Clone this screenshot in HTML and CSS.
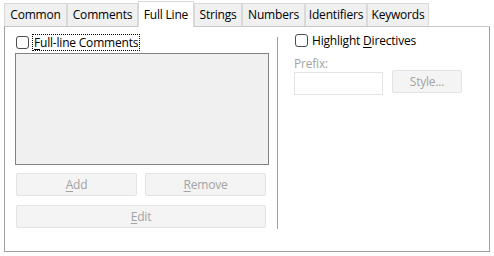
FILE: index.html
```html
<!DOCTYPE html>
<html lang="en">

<head>
    <meta charset="UTF-8">
    <title>Full Line</title>
    <link rel="stylesheet" href="styles.css">
</head>

<body>
    <!-- tab strip -->
    <div class="tabs">
        <div class="tab">Common</div>
        <div class="tab">Comments</div>
        <div class="tab tab-active">Full Line</div>
        <div class="tab">Strings</div>
        <div class="tab">Numbers</div>
        <div class="tab">Identifiers</div>
        <div class="tab">Keywords</div>
    </div>

    <!-- tab page -->
    <div class="panel">
        <div class="left">
            <label class="check check-focus">
                <span class="box"></span>
                <span class="label"><u>F</u>ull-line Comments</span>
            </label>
            <div class="listbox"></div>
            <div class="btn-row">
                <button class="btn" disabled><u>A</u>dd</button>
                <button class="btn" disabled><u>R</u>emove</button>
            </div>
            <button class="btn btn-wide" disabled><u>E</u>dit</button>
        </div>

        <div class="sep"></div>

        <div class="right">
            <label class="check">
                <span class="box"></span>
                <span class="label">Highlight <u>D</u>irectives</span>
            </label>
            <div class="prefix-label">Prefix:</div>
            <div class="prefix-row">
                <div class="input"></div>
                <button class="btn btn-style" disabled>Style...</button>
            </div>
        </div>
    </div>
</body>

</html>
```

FILE: styles.css
```css
* {
    margin: 0;
    padding: 0;
    box-sizing: border-box;
}

body {
    width: 494px;
    height: 256px;
    background-color: #fff;
    font-family: "Open Sans", "Noto Sans", sans-serif;
    font-size: 12px;
    letter-spacing: -0.2px;
    color: #000;
    padding: 1px 0 0 4px;
}

u {
    text-decoration: underline;
    text-underline-offset: 2px;
}

/* tabs */
.tabs {
    display: grid;
    grid-template-columns: 63px 71px 56px 48px 63px 62px 62px;
    align-items: end;
    height: 25px;
    width: 425px;
}

.tab {
    height: 23px;
    line-height: 21px;
    text-align: center;
    background-color: #f0f0f0;
    border: 1px solid #d9d9d9;
    border-bottom: none;
    white-space: nowrap;
}

.tab-active {
    height: 26px;
    line-height: 25px;
    background-color: #fff;
    border-color: #d9d9d9;
    position: relative;
    margin-bottom: -1px;
    z-index: 1;
}

/* page */
.panel {
    width: 486px;
    height: 226px;
    border: 1px solid #a0a0a0;
    border-top-color: #c8c8c8;
    display: flex;
    padding: 7px 0 0 10px;
}

.left {
    width: 254px;
}

.check {
    display: flex;
    align-items: center;
    height: 16px;
    margin-left: 1px;
}

.box {
    width: 13px;
    height: 13px;
    border: 1px solid #4d4d4d;
    border-radius: 3px;
    background-color: #fff;
    margin-right: 4px;
}

.check-focus .label {
    outline: 1px dotted #000;
    padding: 0 1px;
    line-height: 15px;
}

.listbox {
    margin-top: 3px;
    height: 112px;
    border: 1px solid #828282;
    background-color: #f0f0f0;
}

.btn {
    font-family: inherit;
    font-size: 12px;
    letter-spacing: inherit;
    color: #a3a3a3;
    height: 23px;
    background-color: #f4f4f4;
    border: 1px solid #e3e3e3;
    border-radius: 2px;
}

.btn-row {
    display: flex;
    gap: 8px;
    margin: 8px 0 0 1px;
}

.btn-row .btn {
    width: 121px;
}

.btn-wide {
    width: 250px;
    margin: 9px 0 0 1px;
}

.sep {
    width: 2px;
    height: 192px;
    margin: 3px 0 0 8px;
    border-left: 1px solid #a0a0a0;
}

.right {
    margin-left: 15px;
}

.right .check {
    margin-top: -2px;
}

.prefix-label {
    color: #a3a3a3;
    margin-top: 8px;
    line-height: 16px;
}

.prefix-row {
    display: flex;
    align-items: flex-start;
    gap: 9px;
    margin-top: -2px;
}

.input {
    width: 89px;
    height: 23px;
    margin-top: 2px;
    border: 1px solid #e3e3e3;
    background-color: #fff;
}

.btn-style {
    width: 70px;
}
```
